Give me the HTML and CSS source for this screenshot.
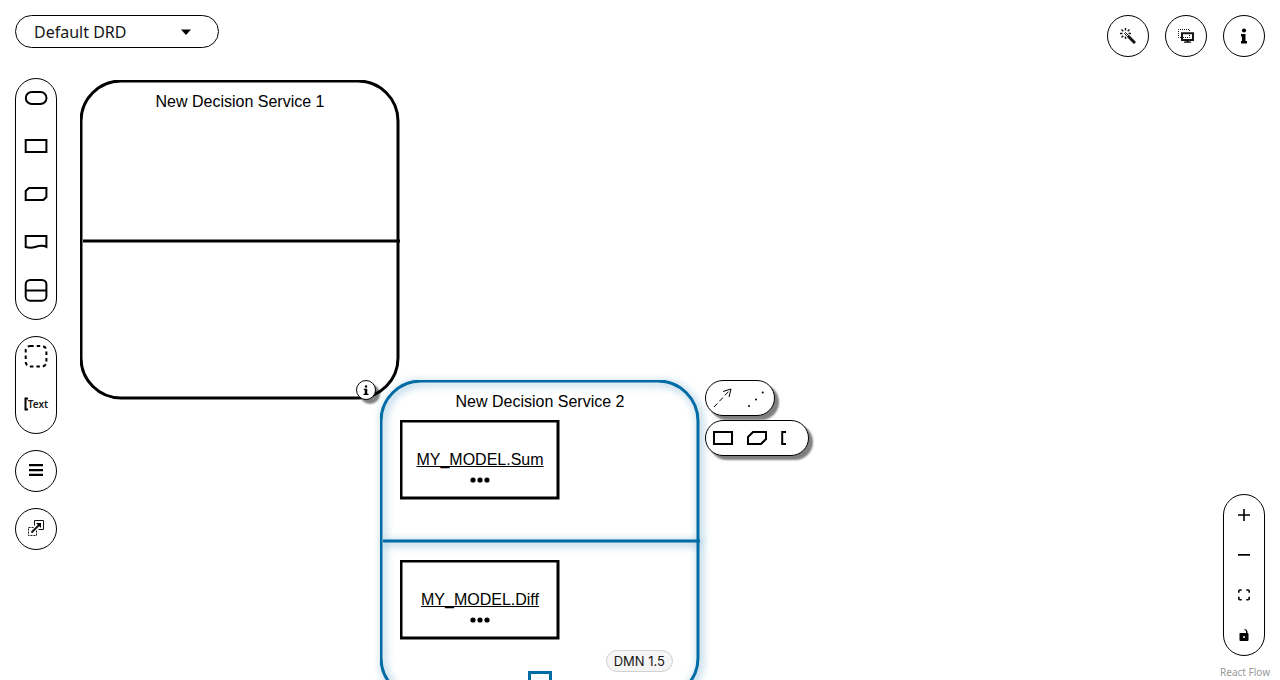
FILE: index.html
```
<!DOCTYPE html>
<html lang="en">
<head>
<meta charset="utf-8">
<title>DMN Editor</title>
<link rel="stylesheet" href="styles.css">
</head>
<body>
<main class="editor">
  <section class="canvas" aria-label="Diagram">
    <article class="node service service-1">
      <svg class="shape" width="320" height="320" viewBox="0 0 320 320" aria-hidden="true"><rect x="1" y="1" width="317" height="317" rx="40"/><path d="M3 161H320"/></svg>
      <h2 class="node-title">New Decision Service 1</h2>
      <button class="node-info" aria-label="Node properties"><svg width="6" height="10" viewBox="0 0 12 20"><path d="M3.500 3a2.500 2.500 0 1 0 5 0a2.500 2.500 0 1 0-5 0M1.500 7.500h7v10H11V20H1V17.500H3.500V10H1.500z"/></svg></button>
    </article>
    <article class="node service service-2 selected">
      <svg class="shape" width="320" height="320" viewBox="0 0 320 320" aria-hidden="true"><rect x="1" y="1" width="317" height="317" rx="40"/><path d="M3 161H320"/></svg>
      <h2 class="node-title">New Decision Service 2</h2>
      <span class="resize-handle"></span>
      <div class="node-toolbars">
        <div class="node-toolbar">
          <button aria-label="Add authority edge"><svg width="20" height="20" viewBox="0 0 20 20" class="thin"><path stroke-dasharray="5 3" d="M1 19L17 2"/><path d="M10 3.500L18 1L16 9"/></svg></button>
          <button aria-label="Add association edge"><svg width="20" height="20" viewBox="0 0 20 20"><circle cx="2" cy="18" r="1"/><circle cx="9" cy="11.500" r="1"/><circle cx="15.700" cy="4.500" r="1"/></svg></button>
        </div>
        <div class="node-toolbar">
          <button aria-label="Add decision"><svg width="20" height="14" viewBox="0 0 20 14" class="line"><path d="M1 1H19V13H1z"/></svg></button>
          <button aria-label="Add knowledge model"><svg width="20" height="14" viewBox="0 0 20 14" class="line"><path d="M6 1H19V8L14 13H1V6z"/></svg></button>
          <button aria-label="Add annotation"><svg width="20" height="14" viewBox="0 0 20 14" class="line"><path d="M5 1H1.200V13H5"/></svg></button>
        </div>
      </div>
    </article>
    <article class="node decision decision-sum">
      <svg class="shape" width="160" height="80" viewBox="0 0 160 80" aria-hidden="true"><rect x="1" y="1" width="157" height="77"/></svg>
      <a href="#sum">MY_MODEL.Sum</a>
      <svg class="dots" width="20" height="6" viewBox="0 0 20 6" aria-hidden="true"><circle cx="3" cy="3" r="2.600"/><circle cx="10" cy="3" r="2.600"/><circle cx="17" cy="3" r="2.600"/></svg>
    </article>
    <article class="node decision decision-diff">
      <svg class="shape" width="160" height="80" viewBox="0 0 160 80" aria-hidden="true"><rect x="1" y="1" width="157" height="77"/></svg>
      <a href="#diff">MY_MODEL.Diff</a>
      <svg class="dots" width="20" height="6" viewBox="0 0 20 6" aria-hidden="true"><circle cx="3" cy="3" r="2.600"/><circle cx="10" cy="3" r="2.600"/><circle cx="17" cy="3" r="2.600"/></svg>
    </article>
  </section>

  <div class="overlay">
    <div class="column">
      <button class="drd-select"><span>Default DRD</span><svg width="10" height="6" viewBox="0 0 10 6" aria-hidden="true"><path d="M0 .5H10L5 6z"/></svg></button>
      <nav class="tools" aria-label="Palette">
        <div class="pill palette">
          <button aria-label="Input data"><svg width="24" height="24" viewBox="0 0 24 24" class="line"><rect x="1.800" y="6" width="20.700" height="12" rx="6"/></svg></button>
          <button aria-label="Decision"><svg width="24" height="24" viewBox="0 0 24 24" class="line"><path d="M1.700 6H22.400V18H1.700z"/></svg></button>
          <button aria-label="Business knowledge model"><svg width="24" height="24" viewBox="0 0 24 24" class="line"><path d="M5 6H22.400V15L19.400 18H1.700V9z"/></svg></button>
          <button aria-label="Knowledge source"><svg width="24" height="24" viewBox="0 0 24 24" class="line"><path d="M1.700 6H22.400V16.800C18.500 14.500 14.500 15.800 11 17S5 18 1.700 17z"/></svg></button>
          <button aria-label="Decision service"><svg width="24" height="24" viewBox="0 0 24 24" class="line"><rect x="1.700" y="2" width="20.700" height="20.700" rx="4.500"/><path d="M2 12.500H22"/></svg></button>
        </div>
        <div class="pill palette">
          <button aria-label="Group"><svg width="24" height="24" viewBox="0 0 24 24" class="line"><rect x="1.700" y="2" width="20.700" height="20.500" rx="4.500" stroke-dasharray="3.500 3"/></svg></button>
          <button class="text-tool" aria-label="Text annotation"><svg width="4" height="14" viewBox="0 0 4 14" class="line"><path d="M4 1.500H1.500V12.500H4"/></svg><span>Text</span></button>
        </div>
        <button class="round" aria-label="Properties list"><svg width="14" height="12" viewBox="0 0 14 12"><path d="M0 0h14v2.300H0zM0 4.900h14v2.300H0zM0 9.700h14v2.300H0z"/></svg></button>
        <button class="round" aria-label="External nodes"><svg width="16" height="16" viewBox="0 0 16 16"><path fill="none" stroke="#151515" d="M6.500 5.500V.5h9v9H10.500"/><path fill="none" stroke="#151515" stroke-dasharray="2 1" d="M5.500 7.500H.5v8h8V10.500"/><path fill="none" stroke="#151515" stroke-width="2" d="M3.500 12.500L11.500 4.500"/><path d="M8 3H13V8z"/></svg></button>
      </nav>
    </div>

    <div class="column right">
      <nav class="actions" aria-label="Diagram actions">
        <button class="round" aria-label="Autolayout"><svg width="16" height="16" viewBox="0 0 16 16"><path fill="none" stroke="#151515" stroke-width="3" d="M8 8L15 15"/><path fill="none" stroke="#151515" d="M4.500 5.500L5.500 4.500L8.500 7.500L7.500 8.500z"/><path fill="none" stroke="#151515" stroke-width="1.400" d="M5.500 0V2.500M1.500 1.500L3.300 3.300M0 5.500H2.500M1.500 9.500L3.300 7.700M5.500 8.500V11M7.700 3.300L9.500 1.500M8.500 5.500H11"/></svg></button>
        <button class="round" aria-label="Overlays"><svg width="16" height="14" viewBox="0 0 16 14"><path fill="none" stroke="#151515" stroke-dasharray="1 1" d="M3 8.500H.5V.5H11.500V3"/><path fill="none" stroke="#151515" stroke-width="2" d="M4 4.300H15V11H4z"/><path fill="none" stroke="#151515" stroke-dasharray="1 1" d="M5 8.500H11.500V5"/><path d="M8.500 11.500H10.500V12.500H13V13.700H6V12.500H8.500z"/></svg></button>
        <button class="round" aria-label="Information"><svg width="8" height="16" viewBox="0 0 8 16"><circle cx="4" cy="2.500" r="2.100"/><path d="M1 6H5.500V13H7V15.500H1V13H2V8.500H1z"/></svg></button>
      </nav>
      <div class="bottom">
        <span class="version">DMN 1.5</span>
        <div class="pill zoom" role="group" aria-label="Zoom">
          <button aria-label="Zoom in"><svg width="12" height="12" viewBox="0 0 12 12"><path d="M5.200 0H6.800V5.200H12V6.800H6.800V12H5.200V6.800H0V5.200H5.200z"/></svg></button>
          <button aria-label="Zoom out"><svg width="12" height="2" viewBox="0 0 12 2"><path d="M0 0H12V1.700H0z"/></svg></button>
          <button aria-label="Fit view"><svg width="12" height="12" viewBox="0 0 12 12"><path fill="none" stroke="#000" stroke-width="1.600" d="M.8 3.700V2Q.8 1 2 1H3.700M8.300 1H10Q11.200 1 11.200 2V3.700M11.200 7.700V9.500Q11.200 10.700 10 10.700H8.300M3.700 10.700H2Q.8 10.700 .8 9.500V7.700"/></svg></button>
          <button aria-label="Toggle interactivity"><svg width="10" height="12" viewBox="0 0 10 12"><path fill-rule="evenodd" d="M1 4H7V2.500Q7 1 4.500 .8Q7.500-.8 8.500 2.500V4Q9.500 4 9.500 5V11Q9.500 12 8.500 12H1.500Q.5 12 .5 11V5Q.5 4 1 4M5 7A1 1 0 1 0 5 9A1 1 0 1 0 5 7"/></svg></button>
        </div>
      </div>
    </div>
  </div>
  <a class="attribution" href="#react-flow">React Flow</a>
</main>
</body>
</html>
```
FILE: styles.css
```
* { box-sizing: border-box; }
body { margin: 0; background: #fff; color: #151515; font-family: "Noto Sans", sans-serif; }
button { display: flex; align-items: center; justify-content: center; margin: 0; padding: 0; border: 0; background: none; color: #151515; font: inherit; }
svg { display: block; flex: none; }
.line { fill: none; stroke: #000; stroke-width: 2; }
.thin { fill: none; stroke: #000; stroke-width: 1; }

.editor { position: relative; height: 100vh; overflow: hidden; }
.canvas { position: absolute; inset: 0; font-family: "Liberation Sans", Arial, sans-serif; }

.node { position: absolute; display: flex; flex-direction: column; align-items: center; color: #000; }
.service { width: 320px; height: 320px; }
.service-1 { left: 80px; top: 80px; }
.service-2 { left: 380px; top: 380px; }
.decision { width: 160px; height: 80px; padding-top: 30px; gap: 7px; }
.decision-sum { left: 400px; top: 420px; }
.decision-diff { left: 400px; top: 560px; }
.decision a { position: relative; color: #000; font-size: 16px; line-height: 20px; }
.dots { position: relative; }
.shape { position: absolute; inset: 0; fill: #fff; stroke: #000; stroke-width: 3; }
.selected .shape { fill: none; stroke: #006ba4; filter: drop-shadow(2px 2px 4px #006ba499); }
.node-title { position: relative; margin: 12px 0 0; font-size: 16px; font-weight: 400; line-height: 20px; }
.node-info { position: absolute; right: 24px; bottom: 0; width: 20px; height: 20px; border: 1px solid #000; border-radius: 50%; background: #fff; box-shadow: 4px 4px 2px #00000080; }
.resize-handle { position: absolute; left: 148px; top: 291px; width: 24px; height: 24px; border: 3px solid #006ba4; background: #fff; }

.node-toolbars { position: absolute; left: 325px; top: 0; display: flex; flex-direction: column; align-items: flex-start; gap: 4px; }
.node-toolbar { display: flex; align-items: center; gap: 14px; height: 36px; padding: 0 7px; border: 1px solid #000; border-radius: 18px; background: #fff; box-shadow: 4px 4px 2px #00000080; }

.overlay { position: relative; display: flex; justify-content: space-between; height: 100%; padding: 15px 15px 24px; pointer-events: none; }
.overlay button { pointer-events: auto; }
.column { display: flex; flex-direction: column; align-items: flex-start; gap: 30px; }
.right { align-items: flex-end; justify-content: space-between; }
.drd-select { width: 204px; height: 33px; padding: 0 27px 0 18px; justify-content: space-between; border: 1px solid #000; border-radius: 17px; background: #fff; font-size: 16px; white-space: nowrap; }
.tools { display: flex; flex-direction: column; gap: 16px; }
.pill { display: flex; flex-direction: column; width: 42px; border: 1px solid #000; border-radius: 21px; background: #fff; }
.palette { gap: 10px; padding-bottom: 10px; }
.palette button { height: 38px; }
.text-tool span { font-size: 10px; font-weight: 600; line-height: 14px; }
.round { width: 42px; height: 42px; border: 1px solid #000; border-radius: 50%; background: #fff; }
.tools .round { padding-bottom: 2px; }
.actions { display: flex; gap: 16px; }
.bottom { position: relative; display: flex; }
.zoom button { height: 40px; }
.version { position: absolute; right: 592px; bottom: -16px; padding: 0 7px; border: 1px solid #d2d2d2; border-radius: 11px; background: #f5f5f5; font-family: Inter, sans-serif; font-size: 13px; line-height: 20px; white-space: nowrap; }
.attribution { position: absolute; right: 10px; bottom: 0; color: #999; font-size: 10px; line-height: 15px; text-decoration: none; }
```
